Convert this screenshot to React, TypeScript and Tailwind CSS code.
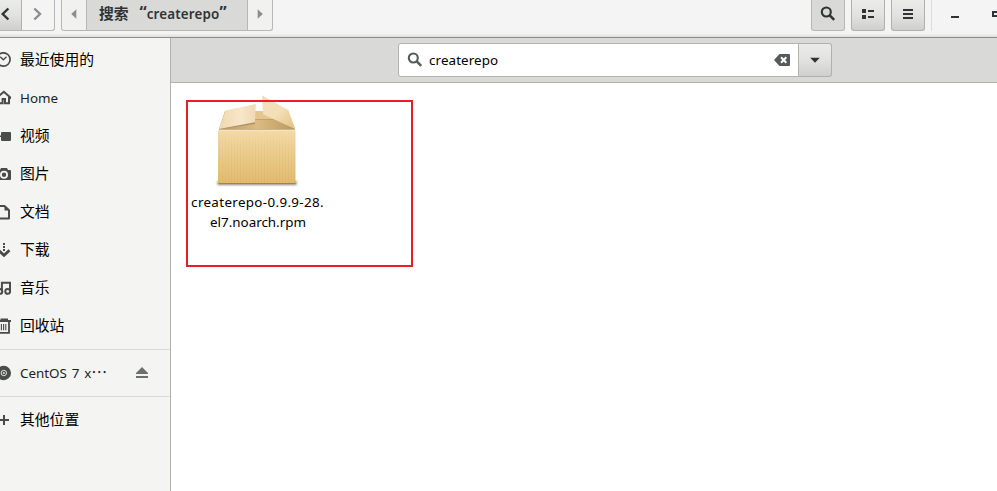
import React from 'react';

const ui = "font-['Noto_Sans','Noto_Sans_CJK_SC',sans-serif]";
const raised = 'bg-gradient-to-b from-[#ebebea] via-[#e2e2e0] to-[#cfcfcd]';

function Glyph({ children, className = '' }: { children: React.ReactNode; className?: string }) {
  return (
    <svg width="16" height="16" viewBox="0 0 16 16" fill="none" stroke="currentColor" strokeWidth="2" className={`block shrink-0 ${className}`}>
      {children}
    </svg>
  );
}

function SearchGlyph({ className = '' }: { className?: string }) {
  return (
    <Glyph className={className}>
      <circle cx="6.3" cy="6" r="4.5" strokeWidth="2.1" />
      <path d="M9.5 9.2 14.2 13.9" strokeWidth="2.5" />
    </Glyph>
  );
}

const places = [
  { label: '最近使用的', icon: <><circle cx="8.4" cy="7.5" r="6.7" strokeWidth="1.7" /><path d="M5.3 4.8 8.4 7.8 11.5 4.8" strokeWidth="1.3" /></> },
  { label: 'Home', latin: true, icon: <><path d="M1 8.4 8.9 1.8 16.5 8.4" strokeWidth="2" /><path d="M3.7 7V13.2H7.6V9H10V13.2H14V7" strokeWidth="2" /></> },
  { label: '视频', icon: <path d="M1 4 5 7.5H6V5Q6 4 7 4H15Q16 4 16 5V12Q16 13 15 13H7Q6 13 6 12V9H5L1 12Z" fill="currentColor" stroke="none" /> },
  { label: '图片', icon: <><path d="M1 4H5L6 2H12L13 4H15Q16 4 16 5V13Q16 14 15 14H1Z" fill="currentColor" stroke="none" /><circle cx="9" cy="8.7" r="3.1" stroke="#f4f4f2" strokeWidth="1.8" /></> },
  { label: '文档', icon: <><path d="M2.5 2H9.5L14 6.2V14.5H2.5Z" strokeWidth="2" strokeLinejoin="round" /><path d="M9.5 1.5V6.5H14.5Z" fill="currentColor" stroke="none" /></> },
  { label: '下载', icon: <><path d="M9 1V9.5" strokeWidth="2" strokeDasharray="2 1" /><path d="M3.5 8.3 9 13.4 14.5 8.3" strokeWidth="2.8" /></> },
  { label: '音乐', icon: <><path d="M6.9 11.5V2.8H15V11" strokeWidth="2" /><circle cx="4.9" cy="11.4" r="2.4" strokeWidth="2" /><circle cx="12.7" cy="11.4" r="2.4" strokeWidth="2" /></> },
  { label: '回收站', icon: <><path d="M1 3H16M5.5 1.5H13" strokeWidth="1.8" /><path d="M3.2 4V14.8H14V4" strokeWidth="1.8" /><path d="M6.4 6V12.3M8.6 6V12.3M10.8 6V12.3" strokeWidth="1.1" /></> },
];

function Row({ label, icon, latin, children }: { label: React.ReactNode; icon: React.ReactNode; latin?: boolean; children?: React.ReactNode }) {
  return (
    <div className="flex h-[38px] items-center">
      <Glyph className="-ml-[5px] text-[#4a4c49]">{icon}</Glyph>
      <span className={`ml-[9px] whitespace-nowrap leading-5 ${latin ? 'text-[13.4px] text-[#1d1f1f]' : 'mb-[2px] text-[14.8px] text-black'}`}>{label}</span>
      {children}
    </div>
  );
}

function PackageBox() {
  return (
    <svg width="86" height="96" viewBox="214 93 86 96" className="-ml-[2px] block">
      <defs>
        <linearGradient id="front" x1="0" y1="0" x2="0" y2="1">
          <stop offset="0" stopColor="#f3daa8" />
          <stop offset=".45" stopColor="#ebcc8c" />
          <stop offset="1" stopColor="#e2ba6d" />
        </linearGradient>
        <linearGradient id="leftFlap" x1="0" y1="0" x2="1" y2="0">
          <stop offset="0" stopColor="#f0d9b1" />
          <stop offset=".6" stopColor="#f7e6c8" />
          <stop offset="1" stopColor="#efd9b4" />
        </linearGradient>
        <linearGradient id="rightFlap" x1="0" y1="0" x2="1" y2="1">
          <stop offset="0" stopColor="#f1dfba" />
          <stop offset=".5" stopColor="#f4dfb7" />
          <stop offset="1" stopColor="#e4c080" />
        </linearGradient>
        <linearGradient id="inside" x1="0" y1="0" x2="1" y2="0">
          <stop offset="0" stopColor="#b39663" />
          <stop offset=".5" stopColor="#dcbc83" />
          <stop offset="1" stopColor="#b89860" />
        </linearGradient>
        <pattern id="ridges" width="3" height="8" patternUnits="userSpaceOnUse">
          <path d="M.5 0V8" stroke="#c99e53" strokeWidth="1" opacity=".16" />
        </pattern>
        <linearGradient id="fade" x1="0" y1="0" x2="0" y2="1">
          <stop offset="0" stopColor="#000" />
          <stop offset=".5" stopColor="#fff" />
        </linearGradient>
        <mask id="ridgeMask"><rect x="218" y="131" width="78" height="53" fill="url(#fade)" /></mask>
        <filter id="soft" x="-10%" y="-200%" width="120%" height="500%"><feGaussianBlur stdDeviation="1.2" /></filter>
      </defs>
      <rect x="217.5" y="181" width="79" height="4" fill="#55472c" opacity=".65" filter="url(#soft)" />
      <path d="M219 129 225 111H288L295 129Z" fill="url(#inside)" />
      <path d="M247 111H265L276 119H252Z" fill="#e3c58d" />
      <path d="M254 119.5H274" stroke="#b79e6c" strokeWidth=".8" />
      <path d="M219 129H295V131H219Z" fill="#8e7344" opacity=".6" />
      <path d="M219 129 255 124V120L240 122Z" fill="#98794a" opacity=".6" />
      <rect x="218" y="130" width="77.5" height="54" rx="1" fill="url(#front)" />
      <rect x="219" y="131" width="76" height="52" fill="url(#ridges)" mask="url(#ridgeMask)" />
      <path d="M218.5 130.3H295.5" stroke="#fae8c5" strokeWidth=".8" />
      <path d="M218.4 183.5H295.4" stroke="#aa823f" strokeWidth="1" />
      <path d="M219 129 225.5 110.5 255.8 104 255 122.3Z" fill="url(#leftFlap)" />
      <path d="M262 95.3 288.5 110.3 295 129 263 114.3Z" fill="url(#rightFlap)" />
    </svg>
  );
}

export default function App() {
  return (
    <div className={`flex h-[491px] w-[997px] flex-col overflow-hidden bg-white text-black ${ui}`}>
      <header className="flex h-[38px] shrink-0 items-start border-b border-[#8c8e8b] bg-gradient-to-b from-[#f4f4f4] from-90% to-[#dededd]">
        <div className="flex h-[31px] w-[55px] overflow-hidden rounded-br-[3px] border-r border-b border-[#b7b7b3] text-[#2e3436]">
          <div className={`flex w-[22px] shrink-0 border-r border-[#b0b0ac] ${raised}`}>
            <Glyph className="-ml-[3px] mt-[6px]"><path d="M11.4 2.5 5.7 8 11.4 13.5" strokeWidth="2.4" /></Glyph>
          </div>
          <Glyph className="ml-[7px] mt-[6px] text-[#8b8e8f]"><path d="M5.3 2.5 11 8 5.3 13.5" strokeWidth="2.4" /></Glyph>
        </div>
        <div className="ml-[6px] flex h-[31px] w-[212px] overflow-hidden rounded-b-[3px] border-x border-b border-[#b7b7b3] bg-[#f1f1f0]">
          <div className="flex w-6 shrink-0 justify-center">
            <Glyph className="mt-[6px] text-[#8b8e8f]"><path d="M10.3 3.3V12.7L5.2 8Z" fill="currentColor" stroke="none" /></Glyph>
          </div>
          <div className="flex w-[162px] shrink-0 border-x border-[#b7b7b3] bg-[#d9d9d7] pl-3 text-[#2e3436]">
            <span className="mt-[3px] text-[14.8px] leading-5 font-bold whitespace-nowrap font-['Noto_Sans_CJK_SC',sans-serif]">搜索</span>
            <span className="ml-[11px] mt-[2px] text-[16px] leading-5 font-bold">“</span>
            <span className="mt-[4px] text-[13.4px] leading-5 font-semibold tracking-[0.15px]">createrepo</span>
            <span className="mt-[2px] text-[16px] leading-5 font-bold">”</span>
          </div>
          <div className="flex w-6 shrink-0 justify-center">
            <Glyph className="mt-[6px] text-[#8b8e8f]"><path d="M5.7 3.3V12.7L10.8 8Z" fill="currentColor" stroke="none" /></Glyph>
          </div>
        </div>
        <div className="ml-auto flex items-start gap-[6px] text-[#2e3436]">
          <div className="flex h-[31px] w-[34px] justify-center rounded-b-[3px] border-x border-b border-[#b7b7b3] bg-[#d9d9d7]">
            <SearchGlyph className="mt-[6px]" />
          </div>
          <div className={`flex h-[31px] w-[34px] justify-center rounded-b-[3px] border-x border-b border-[#b0b0ac] ${raised}`}>
            <Glyph className="mt-[6px]"><path d="M2 3H6V7H2ZM2 9H6V13H2ZM8 4H14V6H8ZM8 10H14V12H8Z" fill="currentColor" stroke="none" /></Glyph>
          </div>
          <div className={`flex h-[31px] w-[34px] justify-center rounded-b-[3px] border-x border-b border-[#b0b0ac] ${raised}`}>
            <Glyph className="mt-[6px]"><path d="M3 4H13M3 8H13M3 12H13" /></Glyph>
          </div>
          <div className="h-[31px] w-px bg-[#dcdcda]" />
          <div className="ml-[13px] mt-4 h-[2px] w-2 bg-[#2e3436]" />
          <div className="ml-[27px] mt-[11px] h-[6px] w-[5px] border-2 border-r-0 border-[#2e3436]" />
        </div>
      </header>
      <div className="flex min-h-0 flex-1">
        <aside className="w-[171px] shrink-0 border-r border-[#b2b2af] bg-[#f4f4f2] pt-[3px]">
          {places.map((p) => <Row key={p.label} {...p} />)}
          <div className="mt-1 mb-1 h-px bg-[#d9d9d6]" />
          <Row label={<span className="[word-spacing:1.3px]">CentOS 7 x<span className="inline-block text-[16px] leading-none font-['Noto_Sans_CJK_SC',sans-serif]">⋯</span></span>} latin icon={<><circle cx="8.8" cy="8" r="7.2" fill="currentColor" stroke="none" /><circle cx="8.8" cy="8" r="2.7" stroke="#e2e2e0" strokeWidth="1" /><circle cx="8.8" cy="8" r="1" fill="#e2e2e0" stroke="none" /></>}>
            <Glyph className="mr-[20px] ml-auto text-[#6b706f]"><path d="M2 8 8 2 14 8V9H2ZM2 11H14V13H2Z" fill="currentColor" stroke="none" /></Glyph>
          </Row>
          <div className="mt-1 mb-1 h-px bg-[#d9d9d6]" />
          <Row label="其他位置" icon={<path d="M4 8H14M9 3V13" strokeWidth="2" />} />
        </aside>
        <main className="flex min-w-0 flex-1 flex-col">
          <div className="flex h-[45px] shrink-0 border-b border-[#b2b2af] bg-[#d9d9d7] pt-[5px] pl-[227px]">
            <div className="flex h-[34px] w-[401px] items-center rounded-l-[3px] border border-[#b2b2af] bg-white pr-2 pl-2 text-[#555b5a]">
              <SearchGlyph />
              <span className="ml-[6px] text-[13.4px] leading-5 tracking-[0.1px] text-black">createrepo</span>
              <Glyph className="ml-auto">
                <path d="M0 8 5.5 2H15Q16 2 16 3V13Q16 14 15 14H5.5Z" fill="currentColor" stroke="none" />
                <path d="M7 5.3 12.3 10.7M12.3 5.3 7 10.7" stroke="#fff" strokeWidth="2" />
              </Glyph>
            </div>
            <div className={`flex h-[34px] w-[33px] items-center justify-center rounded-r-[3px] border border-l-0 border-[#b0b0ac] ${raised}`}>
              <Glyph className="text-[#2e3436]"><path d="M3.2 5.8H12.8L8 10.8Z" fill="currentColor" stroke="none" /></Glyph>
            </div>
          </div>
          <div className="relative flex-1 pt-[10px] pl-4">
            <div className="flex w-[142px] flex-col items-center">
              <PackageBox />
              <p className="mt-[3px] flex flex-col items-center text-[13.4px] leading-5 whitespace-nowrap">
                <span className="-ml-px tracking-[0.34px]">createrepo-0.9.9-28.</span>
                <span>el7.noarch.rpm</span>
              </p>
            </div>
            <div className="absolute top-[17px] left-[15px] h-[167px] w-[227px] border-2 border-[#ec1c24]" />
          </div>
        </main>
      </div>
    </div>
  );
}
